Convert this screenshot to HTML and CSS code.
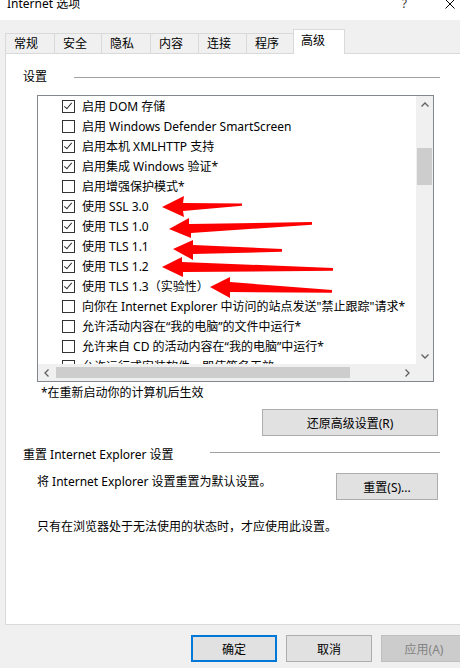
FILE: index.html
```html
<!DOCTYPE html>
<html lang="zh-CN">
<head>
    <meta charset="UTF-8">
    <meta name="viewport" content="width=device-width, initial-scale=1.0">
    <title>Internet 选项</title>
    <link rel="stylesheet" href="styles.css">
</head>
<body>
    <div class="window">
        <div class="titlebar">
            <span class="title">Internet 选项</span>
            <span class="help">?</span>
            <svg class="close" width="10" height="10" viewBox="0 0 10 10"><path d="M0.5 0.5 L9.5 9.5 M9.5 0.5 L0.5 9.5" stroke="#000" stroke-width="1"/></svg>
        </div>

        <div class="client">
            <div class="tabs">
                <div class="tab">常规</div>
                <div class="tab">安全</div>
                <div class="tab">隐私</div>
                <div class="tab">内容</div>
                <div class="tab">连接</div>
                <div class="tab">程序</div>
                <div class="tab active">高级</div>
            </div>

            <div class="panel">
                <div class="panel-inner">
                    <div class="group-head">
                        <span class="group-label first">设置</span>
                        <span class="group-line"></span>
                    </div>

                    <div class="listbox">
                        <div class="list-main">
                            <div class="items">
                                <div class="row"><span class="check on"></span>启用 DOM 存储</div>
                                <div class="row"><span class="check"></span>启用 Windows Defender SmartScreen</div>
                                <div class="row"><span class="check on"></span>启用本机 XMLHTTP 支持</div>
                                <div class="row"><span class="check on"></span>启用集成 Windows 验证*</div>
                                <div class="row"><span class="check"></span>启用增强保护模式*</div>
                                <div class="row"><span class="check on"></span>使用 SSL 3.0</div>
                                <div class="row"><span class="check on"></span>使用 TLS 1.0</div>
                                <div class="row"><span class="check on"></span>使用 TLS 1.1</div>
                                <div class="row"><span class="check on"></span>使用 TLS 1.2</div>
                                <div class="row"><span class="check on"></span>使用 TLS 1.3（实验性）</div>
                                <div class="row"><span class="check"></span>向你在 Internet Explorer 中访问的站点发送"禁止跟踪"请求*</div>
                                <div class="row"><span class="check"></span>允许活动内容在“我的电脑”的文件中运行*</div>
                                <div class="row"><span class="check"></span>允许来自 CD 的活动内容在“我的电脑”中运行*</div>
                                <div class="row"><span class="check"></span>允许运行或安装软件，即使签名无效</div>
                            </div>
                            <div class="hscroll">
                                <svg class="chev" width="8" height="8" viewBox="0 0 8 8"><path d="M5.5 0.5 L2 4 L5.5 7.5" fill="none" stroke="#606060" stroke-width="1.3"/></svg>
                                <div class="hthumb"></div>
                                <span class="hspace"></span>
                                <svg class="chev" width="8" height="8" viewBox="0 0 8 8"><path d="M2.5 0.5 L6 4 L2.5 7.5" fill="none" stroke="#606060" stroke-width="1.3"/></svg>
                            </div>
                        </div>
                        <div class="vscroll">
                            <svg class="chev up" width="8" height="8" viewBox="0 0 8 8"><path d="M0.5 5.5 L4 2 L7.5 5.5" fill="none" stroke="#606060" stroke-width="1.3"/></svg>
                            <div class="vthumb"></div>
                            <span class="vspace"></span>
                            <svg class="chev down" width="8" height="8" viewBox="0 0 8 8"><path d="M0.5 2.5 L4 6 L7.5 2.5" fill="none" stroke="#606060" stroke-width="1.3"/></svg>
                            <div class="corner"></div>
                        </div>
                    </div>

                    <p class="note">*在重新启动你的计算机后生效</p>

                    <div class="right">
                        <button class="btn restore">还原高级设置(R)</button>
                    </div>

                    <div class="group-head second">
                        <span class="group-label reset">重置 Internet Explorer 设置</span>
                        <span class="group-line"></span>
                    </div>

                    <div class="reset-row">
                        <span class="reset-text">将 Internet Explorer 设置重置为默认设置。</span>
                        <button class="btn reset-btn">重置(S)...</button>
                    </div>

                    <p class="warn">只有在浏览器处于无法使用的状态时，才应使用此设置。</p>
                </div>
            </div>

            <div class="footer">
                <button class="btn default">确定</button>
                <button class="btn">取消</button>
                <button class="btn disabled">应用(A)</button>
            </div>
        </div>

        <!-- red arrows drawn on top of the screenshot -->
        <svg class="arrows" width="460" height="668" viewBox="0 0 460 668">
            <polygon points="162,207 184,196 183,203 242,203.5 242,205.8 183,211 184,217"/>
            <polygon points="169,229 189,218 189,224 312,222 312,224.8 191,233 191,238"/>
            <polygon points="173,249 193,240 193,245 282,249 282,251.8 193,254 193,260"/>
            <polygon points="162,267 182,257 182,262 333,268 333,270.8 183,272 183,277"/>
            <polygon points="210,287 230,277 230,282 332,290 332,292.8 230,292 230,298"/>
        </svg>
    </div>
</body>
</html>
```

FILE: styles.css
```css
html, body {
    margin: 0;
    padding: 0;
    overflow: hidden;
}
body {
    font-family: "Noto Sans", "Noto Sans CJK SC", sans-serif;
    font-size: 12px;
    color: #000;
    background-color: #f0f0f0;
}
.window {
    position: relative;
    width: 460px;
    height: 668px;
    overflow: hidden;
}
.titlebar {
    display: flex;
    align-items: flex-start;
    height: 20px;
    background-color: #ffffff;
}
.title {
    margin-left: 7px;
    margin-top: -4px;
    line-height: 16px;
}
.help {
    margin-left: auto;
    margin-top: -4px;
    line-height: 16px;
    color: #333;
}
.close {
    margin-left: 38px;
    margin-right: 5px;
    margin-top: -1px;
}

.client {
    padding: 9px 0 0 5px;
}
.tabs {
    display: flex;
    align-items: flex-end;
    height: 24px;
}
.tab {
    position: relative;
    height: 20px;
    line-height: 20px;
    padding-left: 8px;
    box-sizing: border-box;
    border: 1px solid #d9d9d9;
    border-bottom: none;
    margin-right: -1px;
    background-color: #f0f0f0;
}
.tab:nth-child(1) { width: 50px; }
.tab:nth-child(2) { width: 48px; }
.tab:nth-child(3) { width: 50px; }
.tab:nth-child(4) { width: 49px; }
.tab:nth-child(5) { width: 49px; }
.tab:nth-child(6) { width: 48px; }
.tab.active {
    width: 52px;
    height: 25px;
    line-height: 21px;
    padding-left: 7px;
    background-color: #ffffff;
    margin-bottom: -1px;
    z-index: 1;
}

.panel {
    width: 470px;
    height: 572px;
    box-sizing: border-box;
    background-color: #ffffff;
    border: 1px solid #d9d9d9;
    padding: 15px 0 0 17px;
}
.panel-inner {
    width: 417px;
}
.group-head {
    display: flex;
    align-items: center;
    height: 16px;
    line-height: 16px;
}
.group-label.first {
    width: 51px;
}
.group-label.reset {
    width: 187px;
}
.group-line {
    flex: 1;
    border-top: 1px solid #a0a0a0;
}
.group-head.second {
    margin-top: 11px;
}
.group-head.second .group-line {
    margin-top: -5px;
}

.listbox {
    display: flex;
    margin: 10px 0 0 14px;
    width: 397px;
    height: 287px;
    box-sizing: border-box;
    border: 1px solid #828790;
}
.list-main {
    flex: 1;
    display: flex;
    flex-direction: column;
    min-width: 0;
}
.items {
    height: 268px;
    overflow: hidden;
}
.row {
    display: flex;
    align-items: center;
    height: 20px;
    padding-left: 24px;
    white-space: nowrap;
}
.check {
    position: relative;
    flex: none;
    width: 13px;
    height: 13px;
    box-sizing: border-box;
    border: 1px solid #333;
    margin-right: 7px;
    background-color: #fff;
}
.check.on::after {
    content: "";
    position: absolute;
    left: 3px;
    top: 0px;
    width: 3px;
    height: 7px;
    border-right: 1px solid #333;
    border-bottom: 1px solid #333;
    transform: rotate(40deg);
}
.hscroll {
    display: flex;
    align-items: center;
    height: 17px;
    background-color: #f0f0f0;
    padding: 0 5px;
}
.hthumb {
    width: 294px;
    height: 11px;
    margin-left: 5px;
    background-color: #cdcdcd;
}
.hspace {
    flex: 1;
}
.vscroll {
    display: flex;
    flex-direction: column;
    align-items: center;
    width: 17px;
    background-color: #f0f0f0;
}
.chev.up {
    margin-top: 5px;
}
.vthumb {
    width: 15px;
    height: 37px;
    margin-top: 39px;
    background-color: #cdcdcd;
}
.vspace {
    flex: 1;
}
.chev.down {
    margin-bottom: 4px;
}
.corner {
    height: 17px;
}

.note {
    margin: 3px 0 0 18px;
    line-height: 16px;
}
.right {
    display: flex;
    justify-content: flex-end;
    margin-top: 8px;
    padding-right: 2px;
}
.btn {
    font-family: "Noto Sans", "Noto Sans CJK SC", sans-serif;
    font-size: 12px;
    color: #000;
    height: 27px;
    padding: 0;
    background-color: #e1e1e1;
    border: 1px solid #adadad;
    box-sizing: border-box;
}
.restore {
    width: 176px;
}
.reset-row {
    display: flex;
    align-items: flex-start;
    justify-content: space-between;
    margin-top: 10px;
    padding: 0 2px 0 14px;
}
.reset-text {
    padding-top: 1px;
    line-height: 16px;
}
.reset-btn {
    width: 102px;
}
.warn {
    margin: 19px 0 0 14px;
    line-height: 16px;
}

.footer {
    display: flex;
    gap: 9px;
    margin: 10px 0 0 186px;
}
.footer .btn {
    flex: none;
    width: 86px;
}
.btn.default {
    border: 2px solid #0078d7;
}
.btn.disabled {
    background-color: #cccccc;
    border-color: #bfbfbf;
    color: #838383;
}

.arrows {
    position: absolute;
    left: 0;
    top: 0;
    pointer-events: none;
}
.arrows polygon {
    fill: #ff0000;
}
```
